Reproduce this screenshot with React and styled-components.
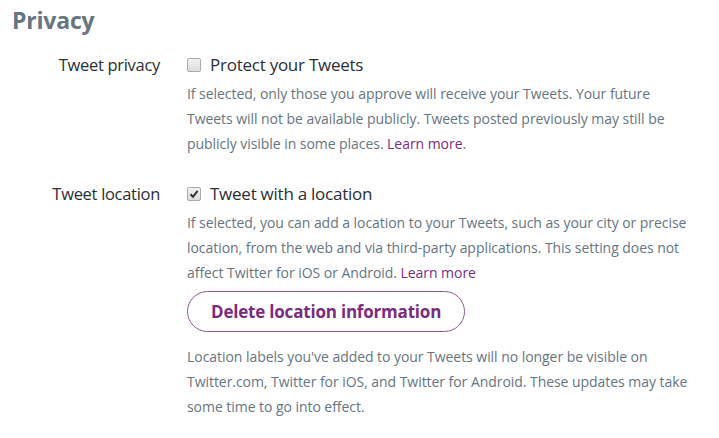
import styled, { createGlobalStyle } from "styled-components";

const GlobalStyle = createGlobalStyle`
    body {
        margin: 0;
        background: #ffffff;
        font-family: "Open Sans", "Noto Sans", sans-serif;
    }
`;

const Page = styled.main`
    width: 719px;
    height: 438px;
    padding: 4px 0 0 0;
    box-sizing: border-box;
    overflow: hidden;
`;

const Heading = styled.h2`
    margin: 0 0 0 12px;
    font-size: 23px;
    line-height: 32px;
    font-weight: 700;
    color: #66757f;
    letter-spacing: -0.2px;
`;

const Setting = styled.section`
    display: grid;
    grid-template-columns: 160px 520px;
    column-gap: 27px;
    margin-top: ${(p) => p.$top}px;
`;

const Label = styled.div`
    text-align: right;
    font-size: 16.5px;
    line-height: 25px;
    color: #292f33;
    letter-spacing: -0.3px;
`;

const Control = styled.div`
    display: flex;
    flex-direction: column;
    align-items: flex-start;
`;

const CheckRow = styled.label`
    display: flex;
    align-items: center;
    gap: 9px;
    font-size: 17px;
    line-height: 25px;
    color: #292f33;
    letter-spacing: -0.25px;
`;

const Box = styled.span`
    width: 12px;
    height: 12px;
    border: 1px solid #a9a9a9;
    border-radius: 2px;
    background: linear-gradient(#f2f2f2, #dcdcdc);
    display: flex;
    align-items: center;
    justify-content: center;
    margin-top: 1px;
`;

const Help = styled.p`
    margin: ${(p) => p.$top || 4}px 0 0 0;
    font-size: 14px;
    line-height: 25px;
    color: #66757f;
    letter-spacing: -0.05px;
    font-weight: 400;
    white-space: nowrap;
`;

const Link = styled.a`
    color: #7b2c80;
    text-decoration: none;
`;

const Button = styled.button`
    margin-top: 6px;
    height: 41px;
    padding: 0 23px;
    border: 1px solid #94569a;
    border-radius: 21px;
    background: #ffffff;
    color: #7b2c80;
    font-family: "Open Sans", "Noto Sans", sans-serif;
    font-size: 17px;
    font-weight: 700;
    letter-spacing: -0.2px;
    cursor: pointer;
`;

function Checkbox({ checked }) {
    return (
        <Box>
            {checked && (
                <svg width="10" height="10" viewBox="0 0 10 10">
                    <path
                        d="M1.5 5.2 L4 7.8 L8.6 1.8"
                        fill="none"
                        stroke="#333"
                        strokeWidth="2"
                    />
                </svg>
            )}
        </Box>
    );
}

export default function App() {
    return (
        <>
            <GlobalStyle />
            <Page>
                <Heading>Privacy</Heading>
                <Setting $top={16}>
                    <Label>Tweet privacy</Label>
                    <Control>
                        <CheckRow>
                            <Checkbox />
                            Protect your Tweets
                        </CheckRow>
                        <Help>
                            If selected, only those you approve will receive
                            your Tweets. Your future
                            <br />
                            Tweets will not be available publicly. Tweets
                            posted previously may still be
                            <br />
                            publicly visible in some places.{" "}
                            <Link href="#">Learn more</Link>.
                        </Help>
                    </Control>
                </Setting>
                <Setting $top={25}>
                    <Label>Tweet location</Label>
                    <Control>
                        <CheckRow>
                            <Checkbox checked />
                            Tweet with a location
                        </CheckRow>
                        <Help>
                            If selected, you can add a location to your Tweets,
                            such as your city or precise
                            <br />
                            location, from the web and via third-party
                            applications. This setting does not
                            <br />
                            affect Twitter for iOS or Android.{" "}
                            <Link href="#">Learn more</Link>
                        </Help>
                        <Button>Delete location information</Button>
                        <Help $top={12}>
                            Location labels you've added to your Tweets will no
                            longer be visible on
                            <br />
                            Twitter.com, Twitter for iOS, and Twitter for
                            Android. These updates may take
                            <br />
                            some time to go into effect.
                        </Help>
                    </Control>
                </Setting>
            </Page>
        </>
    );
}
